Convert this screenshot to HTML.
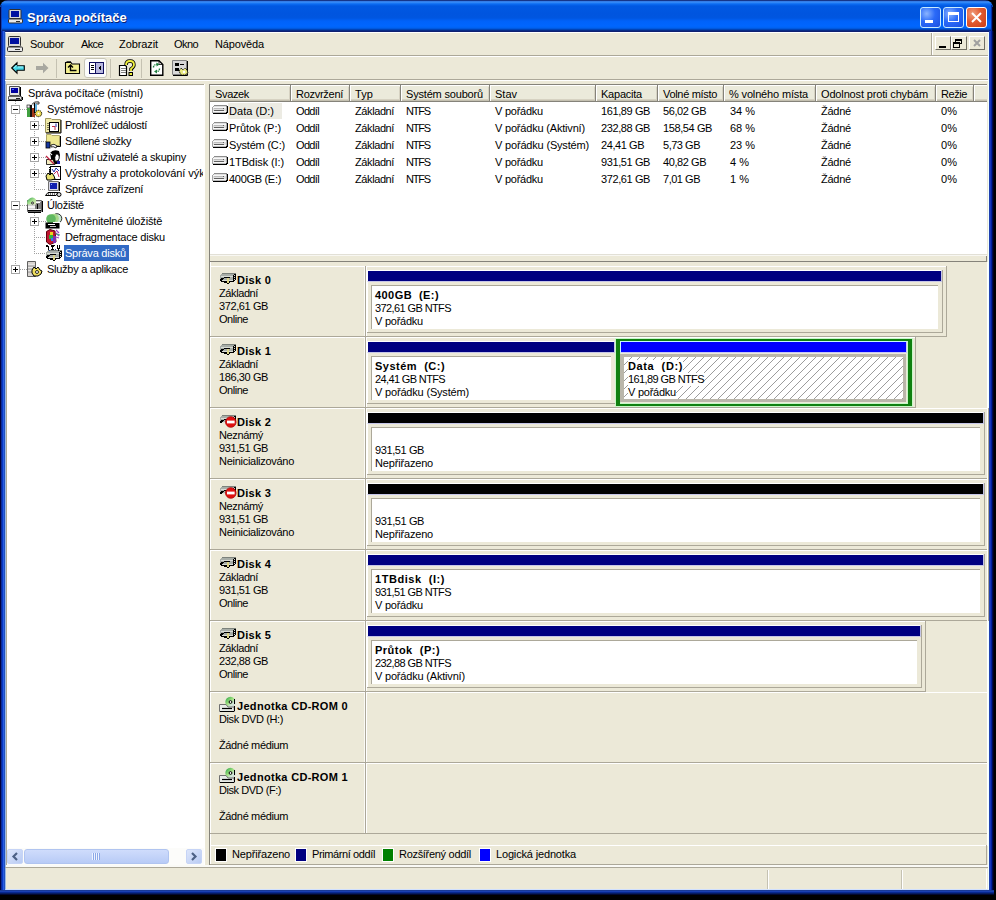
<!DOCTYPE html><html><head><meta charset="utf-8"><style>
*{margin:0;padding:0;box-sizing:border-box}
html,body{width:996px;height:900px;background:#000;overflow:hidden}
body{position:relative;font-family:"Liberation Sans",sans-serif;font-size:11px;color:#000}
.a{position:absolute}
.t{position:absolute;white-space:pre;line-height:13px;font-size:11px}
.b{font-weight:bold}
svg{position:absolute;overflow:visible}
</style></head><body>
<div class="a" style="left:0px;top:0px;width:993px;height:33px;border-radius:8px 8px 0 0;background:linear-gradient(to bottom,#00003a 0px,#2a6ad8 1px,#3d90f8 2px,#0b6cf2 4px,#0058e2 6px,#0055df 14px,#0056e0 18px,#0062fa 21px,#0066ff 26px,#0062f0 28px,#0050d0 29px,#0038a0 30px,#102070 31px,#102070 33px)"></div>
<div class="a" style="left:0px;top:31px;width:1px;height:864px;background:#000040"></div>
<div class="a" style="left:1px;top:31px;width:1px;height:864px;background:#0a2c98"></div>
<div class="a" style="left:2px;top:31px;width:1px;height:864px;background:#0838c8"></div>
<div class="a" style="left:3px;top:31px;width:1px;height:864px;background:#2a5ee0"></div>
<div class="a" style="left:4px;top:31px;width:1px;height:864px;background:#2050c0"></div>
<div class="a" style="left:0px;top:7px;width:1px;height:24px;background:#000040"></div>
<div class="a" style="left:1px;top:5px;width:1px;height:26px;background:#1040b0"></div>
<div class="a" style="left:992px;top:7px;width:1px;height:24px;background:#000030"></div>
<div class="a" style="left:991px;top:5px;width:1px;height:26px;background:#0030a0"></div>
<div class="a" style="left:989px;top:31px;width:1px;height:864px;background:#2040b0"></div>
<div class="a" style="left:990px;top:31px;width:1px;height:864px;background:#1838b8"></div>
<div class="a" style="left:991px;top:31px;width:1px;height:864px;background:#0020a0"></div>
<div class="a" style="left:992px;top:31px;width:1px;height:864px;background:#000c50"></div>
<div class="a" style="left:993px;top:31px;width:1px;height:864px;background:#000020"></div>
<div class="a" style="left:0px;top:890px;width:994px;height:1px;background:#1a3a98"></div>
<div class="a" style="left:0px;top:891px;width:994px;height:1px;background:#1a40b0"></div>
<div class="a" style="left:0px;top:892px;width:994px;height:1px;background:#082890"></div>
<div class="a" style="left:0px;top:893px;width:994px;height:1px;background:#061c60"></div>
<div class="a" style="left:0px;top:894px;width:994px;height:1px;background:#020830"></div>
<div class="a" style="left:5px;top:32px;width:984px;height:858px;background:#ece9d8;border:1px solid #98b8e8;border-top-color:#fff;border-right-color:#f0ffff;border-bottom-color:#d0e0ff"></div>
<svg style="left:8px;top:9px" width="15" height="15" viewBox="0 0 15 15">
<rect x="1" y="0.5" width="12" height="9" rx="1" fill="#d8d8d8" stroke="#303030"/>
<rect x="3" y="2" width="8" height="6" fill="#0010a0"/>
<rect x="0.5" y="10" width="14" height="4" rx="1" fill="#e8e8e8" stroke="#303030"/>
<rect x="8" y="12" width="4" height="1" fill="#303030"/></svg>
<div class="t b" style="left:27px;top:10px;font-size:13px;line-height:16px;color:#fff;text-shadow:1px 1px 0 #0a1e6e">Správa počítače</div>
<div class="a" style="left:920px;top:7px;width:21px;height:21px;border:1px solid #c8ecff;border-radius:3px;background:radial-gradient(circle at 30% 30%,#8ab4ff 0,#2a6af8 45%,#1a50e0 100%)"></div>
<div class="a" style="left:943px;top:7px;width:21px;height:21px;border:1px solid #c8ecff;border-radius:3px;background:radial-gradient(circle at 30% 30%,#8ab4ff 0,#2a6af8 45%,#1a50e0 100%)"></div>
<div class="a" style="left:966px;top:7px;width:21px;height:21px;border:1px solid #fff;border-radius:3px;background:radial-gradient(circle at 30% 30%,#f0a080 0,#e25a30 45%,#c83c18 100%)"></div>
<div class="a" style="left:925px;top:20px;width:8px;height:3px;background:#fff"></div>
<div class="a" style="left:948px;top:12px;width:11px;height:10px;border:1px solid #fff;border-top-width:3px"></div>
<svg style="left:966px;top:7px" width="21" height="21"><path d="M6 6 L15 15 M15 6 L6 15" stroke="#fff" stroke-width="2"/></svg>
<svg style="left:7px;top:36px" width="16" height="16" viewBox="0 0 16 16">
<rect x="1.5" y="0.5" width="12" height="10" rx="1" fill="#d8d8d8" stroke="#303030"/>
<rect x="3" y="2" width="9" height="6" fill="#0010a0"/>
<rect x="0.5" y="11" width="15" height="4.5" rx="1" fill="#e8e8e8" stroke="#303030"/>
<rect x="8" y="13" width="5" height="1" fill="#303030"/></svg>
<div class="t " style="left:30px;top:38px;;letter-spacing:-0.25px">Soubor</div>
<div class="t " style="left:81px;top:38px;;letter-spacing:-0.61px">Akce</div>
<div class="t " style="left:119px;top:38px;;letter-spacing:-0.09px">Zobrazit</div>
<div class="t " style="left:174px;top:38px;;letter-spacing:-0.57px">Okno</div>
<div class="t " style="left:215px;top:38px;;letter-spacing:-0.14px">Nápověda</div>
<div class="a" style="left:5px;top:55px;width:983px;height:1px;background:#aca899"></div>
<div class="a" style="left:5px;top:56px;width:983px;height:1px;background:#fff"></div>
<div class="a" style="left:931px;top:33px;width:1px;height:22px;background:#aca899"></div>
<div class="a" style="left:932px;top:33px;width:1px;height:22px;background:#fff"></div>
<div class="a" style="left:935px;top:36px;width:16px;height:14px;background:#ece9d8;border:1px solid;border-color:#fff #716f64 #716f64 #fff"></div>
<div class="a" style="left:951px;top:36px;width:16px;height:14px;background:#ece9d8;border:1px solid;border-color:#fff #716f64 #716f64 #fff"></div>
<div class="a" style="left:969px;top:36px;width:16px;height:14px;background:#ece9d8;border:1px solid;border-color:#fff #716f64 #716f64 #fff"></div>
<div class="a" style="left:939px;top:46px;width:7px;height:2px;background:#000"></div>
<div class="a" style="left:955px;top:39px;width:7px;height:5px;border:1px solid #000;border-top-width:2px"></div>
<div class="a" style="left:953px;top:42px;width:7px;height:6px;border:1px solid #000;border-top-width:2px;background:#ece9d8"></div>
<svg style="left:969px;top:36px" width="16" height="14"><path d="M5 4 L11 10 M11 4 L5 10" stroke="#a0a0a0" stroke-width="2"/></svg>
<svg style="left:11px;top:62px" width="14" height="12" viewBox="0 0 14 12">
<path d="M0.7 6 L6 0.8 L6 3.8 L13.3 3.8 L13.3 8.2 L6 8.2 L6 11.2 Z" fill="#48d8e8" stroke="#000" stroke-width="1.1"/><path d="M3 6 L6.5 2.8 M7 5 H12" stroke="#b0f8ff" stroke-width="0.9"/></svg>
<svg style="left:35px;top:62px" width="14" height="12" viewBox="0 0 14 12">
<path d="M13.5 6 L8 0.8 L8 4 L1 4 L1 8 L8 8 L8 11.2 Z" fill="#a8a8a0"/></svg>
<div class="a" style="left:56px;top:59px;width:1px;height:19px;background:#c5c2b2"></div>
<svg style="left:64px;top:60px" width="17" height="15" viewBox="0 0 17 15">
<path d="M1.5 2.5 H7 L8 4 H15.5 V13.5 H1.5Z" fill="#f4f090" stroke="#000" stroke-width="1.1"/><path d="M2.5 1.5 H7" stroke="#404040"/>
<path d="M4 7.5 L6.5 5 L9 7.5 M6.5 5.5 V10.5 H12.5" fill="none" stroke="#000" stroke-width="1.4"/></svg>
<div class="a" style="left:84px;top:58px;width:23px;height:20px;background:#fcfcfb;border:1px solid #c8c6b8;border-radius:3px"></div>
<svg style="left:89px;top:62px" width="15" height="12" viewBox="0 0 15 12" shape-rendering="crispEdges">
<rect x="0" y="0" width="15" height="12" fill="#101060"/>
<rect x="1" y="1" width="5" height="10" fill="#fff"/><rect x="7" y="1" width="7" height="10" fill="#b8b8e0"/>
<rect x="2" y="3" width="3" height="1" fill="#000"/><rect x="2" y="5" width="3" height="1" fill="#000"/><rect x="2" y="7" width="3" height="1" fill="#000"/>
<path d="M12 3 L12 9 L9 6Z" fill="#000"/></svg>
<div class="a" style="left:110px;top:59px;width:1px;height:19px;background:#c5c2b2"></div>
<svg style="left:118px;top:59px" width="17" height="17" viewBox="0 0 17 17">
<path d="M1.5 6.5 H7.5 L8.5 7.5 V16.5 H1.5Z" fill="#fff" stroke="#000" stroke-width="1.2"/>
<path d="M3 9.5h5M3 11.5h5M3 13.5h5" stroke="#808080"/>
<path d="M8 6 Q8 2 12 2 Q16 2 16 6 Q16 8 13 10 L13 12" fill="none" stroke="#000" stroke-width="3.4"/>
<path d="M8 6 Q8 2 12 2 Q16 2 16 6 Q16 8 13 10 L13 12" fill="none" stroke="#f0f040" stroke-width="1.8"/>
<rect x="11" y="13.5" width="3.5" height="3" fill="#f0f040" stroke="#000"/></svg>
<div class="a" style="left:141px;top:59px;width:1px;height:19px;background:#c5c2b2"></div>
<svg style="left:150px;top:60px" width="14" height="16" viewBox="0 0 14 16">
<path d="M0.7 0.7 H9 L12.8 4.5 V15.3 H0.7Z" fill="#fff" stroke="#000" stroke-width="1.4"/><path d="M9 1 V4.5 H12.5" fill="none" stroke="#000" stroke-width="0.8"/>
<path d="M3.5 7.5 Q3.5 4.5 7 4.3" fill="none" stroke="#208040" stroke-width="1.4" stroke-dasharray="1.5 0.8"/><path d="M6.5 2.5 L9.5 4.5 L6.5 6.5Z" fill="#208040"/>
<path d="M9.5 8.5 Q9.5 11.5 6 11.7" fill="none" stroke="#208040" stroke-width="1.4" stroke-dasharray="1.5 0.8"/><path d="M7 9.5 L4 11.5 L7 13.5Z" fill="#208040"/></svg>
<svg style="left:172px;top:60px" width="17" height="16" viewBox="0 0 17 16">
<path d="M0.5 0.5 H14.5 V14.5 H0.5Z" fill="#d8d8d8" stroke="#808080"/><path d="M15.5 1 V15.5 H1" fill="none" stroke="#000"/>
<rect x="3" y="3" width="4" height="3" fill="#000"/><rect x="8" y="4" width="4" height="1" fill="#000"/><rect x="3" y="8" width="4" height="3" fill="#000"/>
<path d="M7 11 L9 8 L11 10 L13 8 L15 10 L16 13 L13 15 L9 15Z" fill="#e8e880" stroke="#000" stroke-width="0.9" stroke-dasharray="1.2 0.6"/><circle cx="12" cy="12" r="1.2" fill="#fff"/></svg>
<div class="a" style="left:5px;top:79px;width:983px;height:1px;background:#aca899"></div>
<div class="a" style="left:5px;top:80px;width:983px;height:1px;background:#fff"></div>
<div class="a" style="left:6px;top:84px;width:199px;height:783px;background:#fff;border-left:1px solid #aca899;border-top:1px solid #aca899;border-right:1px solid #f4f3ee"></div>
<div class="a" style="left:15px;top:101px;width:1px;height:169px;background:repeating-linear-gradient(to bottom,#a0a0a0 0,#a0a0a0 1px,transparent 1px,transparent 2px)"></div>
<div class="a" style="left:34px;top:117px;width:1px;height:72px;background:repeating-linear-gradient(to bottom,#a0a0a0 0,#a0a0a0 1px,transparent 1px,transparent 2px)"></div>
<div class="a" style="left:34px;top:213px;width:1px;height:40px;background:repeating-linear-gradient(to bottom,#a0a0a0 0,#a0a0a0 1px,transparent 1px,transparent 2px)"></div>
<div class="a" style="left:20px;top:109px;width:7px;height:1px;background:repeating-linear-gradient(to right,#a0a0a0 0,#a0a0a0 1px,transparent 1px,transparent 2px)"></div>
<div class="a" style="left:20px;top:205px;width:7px;height:1px;background:repeating-linear-gradient(to right,#a0a0a0 0,#a0a0a0 1px,transparent 1px,transparent 2px)"></div>
<div class="a" style="left:20px;top:269px;width:7px;height:1px;background:repeating-linear-gradient(to right,#a0a0a0 0,#a0a0a0 1px,transparent 1px,transparent 2px)"></div>
<div class="a" style="left:39px;top:125px;width:7px;height:1px;background:repeating-linear-gradient(to right,#a0a0a0 0,#a0a0a0 1px,transparent 1px,transparent 2px)"></div>
<div class="a" style="left:39px;top:141px;width:7px;height:1px;background:repeating-linear-gradient(to right,#a0a0a0 0,#a0a0a0 1px,transparent 1px,transparent 2px)"></div>
<div class="a" style="left:39px;top:157px;width:7px;height:1px;background:repeating-linear-gradient(to right,#a0a0a0 0,#a0a0a0 1px,transparent 1px,transparent 2px)"></div>
<div class="a" style="left:39px;top:173px;width:7px;height:1px;background:repeating-linear-gradient(to right,#a0a0a0 0,#a0a0a0 1px,transparent 1px,transparent 2px)"></div>
<div class="a" style="left:34px;top:189px;width:12px;height:1px;background:repeating-linear-gradient(to right,#a0a0a0 0,#a0a0a0 1px,transparent 1px,transparent 2px)"></div>
<div class="a" style="left:39px;top:221px;width:7px;height:1px;background:repeating-linear-gradient(to right,#a0a0a0 0,#a0a0a0 1px,transparent 1px,transparent 2px)"></div>
<div class="a" style="left:34px;top:237px;width:12px;height:1px;background:repeating-linear-gradient(to right,#a0a0a0 0,#a0a0a0 1px,transparent 1px,transparent 2px)"></div>
<div class="a" style="left:34px;top:253px;width:12px;height:1px;background:repeating-linear-gradient(to right,#a0a0a0 0,#a0a0a0 1px,transparent 1px,transparent 2px)"></div>
<div class="a" style="left:11px;top:105px;width:9px;height:9px;background:#fff;border:1px solid #a5a5a5"></div>
<div class="a" style="left:13px;top:109px;width:5px;height:1px;background:#000"></div>
<div class="a" style="left:11px;top:201px;width:9px;height:9px;background:#fff;border:1px solid #a5a5a5"></div>
<div class="a" style="left:13px;top:205px;width:5px;height:1px;background:#000"></div>
<div class="a" style="left:11px;top:265px;width:9px;height:9px;background:#fff;border:1px solid #a5a5a5"></div>
<div class="a" style="left:13px;top:269px;width:5px;height:1px;background:#000"></div>
<div class="a" style="left:15px;top:267px;width:1px;height:5px;background:#000"></div>
<div class="a" style="left:30px;top:121px;width:9px;height:9px;background:#fff;border:1px solid #a5a5a5"></div>
<div class="a" style="left:32px;top:125px;width:5px;height:1px;background:#000"></div>
<div class="a" style="left:34px;top:123px;width:1px;height:5px;background:#000"></div>
<div class="a" style="left:30px;top:137px;width:9px;height:9px;background:#fff;border:1px solid #a5a5a5"></div>
<div class="a" style="left:32px;top:141px;width:5px;height:1px;background:#000"></div>
<div class="a" style="left:34px;top:139px;width:1px;height:5px;background:#000"></div>
<div class="a" style="left:30px;top:153px;width:9px;height:9px;background:#fff;border:1px solid #a5a5a5"></div>
<div class="a" style="left:32px;top:157px;width:5px;height:1px;background:#000"></div>
<div class="a" style="left:34px;top:155px;width:1px;height:5px;background:#000"></div>
<div class="a" style="left:30px;top:169px;width:9px;height:9px;background:#fff;border:1px solid #a5a5a5"></div>
<div class="a" style="left:32px;top:173px;width:5px;height:1px;background:#000"></div>
<div class="a" style="left:34px;top:171px;width:1px;height:5px;background:#000"></div>
<div class="a" style="left:30px;top:217px;width:9px;height:9px;background:#fff;border:1px solid #a5a5a5"></div>
<div class="a" style="left:32px;top:221px;width:5px;height:1px;background:#000"></div>
<div class="a" style="left:34px;top:219px;width:1px;height:5px;background:#000"></div>
<svg style="left:7px;top:86px" width="16" height="16" viewBox="0 0 16 16"><path d="M2.5 0.5 H12.5 V9.5 H2.5Z" fill="#e4e4e4" stroke="#505050"/><path d="M13.5 1 V10" stroke="#000"/>
<rect x="4" y="2" width="7" height="5" fill="#0000a0"/><rect x="5" y="3" width="2" height="1" fill="#4060ff"/>
<path d="M1.5 10.5 H14.5 V13.5 H1.5Z" fill="#e8e8e8" stroke="#606060"/><path d="M1 14.5 H15 M15.5 11 V14" stroke="#000"/><rect x="9" y="12" width="4" height="1" fill="#202020"/></svg>
<div class="t " style="left:28px;top:87px;;letter-spacing:-0.20px">Správa počítače (místní)</div>
<svg style="left:26px;top:101px" width="17" height="16" viewBox="0 0 17 16">
<path d="M6 3.5 Q8 0 13 1 L13 3 Q9 2 8 5" fill="#c8c8c8" stroke="#404040"/>
<rect x="1" y="4" width="3" height="3" fill="#f0f0f0" stroke="#000" stroke-width="0.6"/>
<rect x="1" y="7" width="3" height="9" fill="#40a040"/><rect x="4" y="4" width="2" height="12" fill="#101010"/>
<rect x="6" y="7" width="3" height="9" fill="#a03818"/><rect x="9" y="3" width="2" height="9" fill="#60b0e0"/><rect x="8" y="2" width="1" height="10" fill="#000"/>
<circle cx="12.5" cy="12.5" r="3.2" fill="#e8d850" stroke="#000" stroke-width="1" stroke-dasharray="1.2 0.8"/><circle cx="12.5" cy="12.5" r="1" fill="#fff"/></svg>
<div class="t " style="left:47px;top:103px;;letter-spacing:-0.03px">Systémové nástroje</div>
<svg style="left:45px;top:117px" width="17" height="16" viewBox="0 0 17 16">
<path d="M0.5 1.5 H6 L7 2.5 H15.5 V15.5 H0.5Z" fill="#f0eaa8" stroke="#a09860"/><path d="M16 3 V16 H1" stroke="#000" fill="none"/>
<rect x="4.5" y="5.5" width="9" height="9" fill="#fff" stroke="#000"/><path d="M3 6v8" stroke="#000" stroke-dasharray="1 1"/>
<path d="M7 9.5 H10 V13" stroke="#c03040" fill="none"/><path d="M11 6.5 V10" stroke="#2030a0"/></svg>
<div class="t " style="left:65px;top:119px;;letter-spacing:-0.30px">Prohlížeč událostí</div>
<svg style="left:45px;top:133px" width="17" height="16" viewBox="0 0 17 16">
<path d="M1.5 1.5 H6 L7 2.5 H14.5 V12.5 H1.5Z" fill="#eee890" stroke="#b0a868"/><path d="M15.5 3 V13.5 H8" stroke="#000" fill="none"/>
<rect x="1" y="9" width="4" height="6" fill="#1838a0" stroke="#000" stroke-width="0.8"/>
<path d="M6 12 Q9 10 12 13 L11 15 Q8 13 6 14Z" fill="#f4f4f4" stroke="#000" stroke-width="0.8"/></svg>
<div class="t " style="left:65px;top:135px;;letter-spacing:-0.35px">Sdílené složky</div>
<svg style="left:45px;top:149px" width="17" height="16" viewBox="0 0 17 16">
<path d="M5 4 Q8 0 14 2 L15 6 L13 15 L7 15 Z" fill="#000"/>
<path d="M11 5 Q15 5 14 10 Q13 13 10 12 Q9 8 11 5Z" fill="#fff" stroke="#000" stroke-width="0.8"/>
<path d="M1.5 10.5 H8 L10 15.5 H1.5Z" fill="#f4ecc0" stroke="#000" stroke-width="0.8"/>
<path d="M1 7 L9 15" stroke="#c02040" stroke-width="1.2"/><path d="M3 4 Q5 3 7 6" stroke="#fff" stroke-width="1.2" fill="none"/>
<rect x="12" y="12" width="3" height="3" fill="#2020a0"/></svg>
<div class="t " style="left:65px;top:151px;;letter-spacing:-0.19px">Místní uživatelé a skupiny</div>
<svg style="left:45px;top:165px" width="17" height="16" viewBox="0 0 17 16">
<rect x="5.5" y="1.5" width="10" height="13" fill="#fff" stroke="#000"/><path d="M4.5 2v5" stroke="#000" stroke-dasharray="1 1"/>
<path d="M7 4 L9 7 L11 3 L14 6" stroke="#2030b0" fill="none"/><path d="M9 9 L12 6 L14 12" stroke="#c03060" fill="none"/>
<path d="M1 11 L3 8 L5 10 L7 8 L9 11 L10 14 L6 15 L2 15Z" fill="#e8e070" stroke="#000" stroke-width="1"/><path d="M5 5 V9" stroke="#000" stroke-width="1.5"/></svg>
<div class="t " style="left:65px;top:167px;;letter-spacing:-0.03px">Výstrahy a protokolování výkonu</div>
<svg style="left:45px;top:181px" width="17" height="16" viewBox="0 0 17 16">
<path d="M3.5 0.5 H13.5 V9.5 H3.5Z" fill="#d8d8e8" stroke="#707070"/><path d="M14.5 1 V10" stroke="#000"/>
<rect x="5" y="2" width="7" height="6" fill="#1020b0"/><rect x="6" y="3" width="1" height="1" fill="#80a0ff"/>
<path d="M0.5 14.5 L3 11.5 H13 L11 14.5Z" fill="#f0f0f0" stroke="#000"/><path d="M3 13 H11" stroke="#000" stroke-dasharray="1 1"/>
<ellipse cx="14" cy="13.5" rx="2" ry="2" fill="#e0e0e0" stroke="#000"/></svg>
<div class="t " style="left:65px;top:183px;;letter-spacing:-0.28px">Správce zařízení</div>
<svg style="left:26px;top:197px" width="17" height="16" viewBox="0 0 17 16">
<defs><linearGradient id="cdg2" x1="0" y1="0" x2="1" y2="1"><stop offset="0" stop-color="#30a050"/><stop offset="0.5" stop-color="#a8e090"/><stop offset="1" stop-color="#e0e8c0"/></linearGradient></defs>
<path d="M1.5 3.5 H15.5 V14.5 H1.5Z" fill="#d0d0d0" stroke="#606060"/><path d="M2 15.5 H15 M16.5 4 V15" stroke="#000"/>
<rect x="9" y="5" width="6" height="7" fill="#808080"/><rect x="10" y="5" width="4" height="1" fill="#fff"/><rect x="11" y="7" width="1" height="5" fill="#000"/>
<rect x="2" y="9" width="7" height="2" fill="#f4f4f4"/><rect x="2" y="12" width="12" height="1" fill="#f4f4f4"/><rect x="2" y="13" width="13" height="1" fill="#000"/>
<path d="M1.5 7.5 A5 5 0 0 1 10 2.5 L10 7.5Z" fill="url(#cdg2)"/>
<circle cx="6.5" cy="6" r="1" fill="#fff" stroke="#000" stroke-width="0.8"/></svg>
<div class="t " style="left:47px;top:199px;;letter-spacing:-0.27px">Úložiště</div>
<svg style="left:45px;top:213px" width="17" height="16" viewBox="0 0 17 16">
<circle cx="12" cy="5.5" r="4.8" fill="#c8e8d0" stroke="#000" stroke-width="0.8"/><circle cx="9" cy="5.5" r="4.8" fill="#a8d888"/><circle cx="6" cy="6" r="4.8" fill="#60b860"/>
<rect x="0.5" y="9.5" width="14" height="6" fill="#000"/><rect x="3" y="11" width="7" height="1" fill="#fff"/><rect x="5" y="13" width="6" height="1" fill="#c0c0c0"/><rect x="8" y="9" width="7" height="1" fill="#fff"/></svg>
<div class="t " style="left:65px;top:215px;;letter-spacing:-0.17px">Vyměnitelné úložiště</div>
<svg style="left:45px;top:229px" width="17" height="16" viewBox="0 0 17 16">
<path d="M1.5 2.5 L5 0.5 L10 2 L11 13 L5 15.5 L1.5 13Z" fill="#c01830" stroke="#600010"/>
<rect x="5" y="3" width="3" height="4" fill="#f0d020"/><rect x="4" y="6" width="4" height="4" fill="#30b040"/><rect x="6" y="9" width="3" height="3" fill="#3080f0"/><rect x="8" y="7" width="3" height="7" fill="#8030b0"/>
<path d="M11 1 L14 4 M11 4 L14 7 M11 8 L14 9" stroke="#a040c0" stroke-width="1.2"/><path d="M11 5 L15 6" stroke="#40a080"/></svg>
<div class="t " style="left:65px;top:231px;;letter-spacing:-0.21px">Defragmentace disku</div>
<svg style="left:46px;top:250px" width="16" height="11" shape-rendering="crispEdges"><rect x="2" y="0" width="14" height="1" fill="#7c827c"/><rect x="1" y="1" width="13" height="1" fill="#a8aea8"/><rect x="14" y="1" width="2" height="1" fill="#000"/><rect x="0" y="2" width="13" height="1" fill="#a8aea8"/><rect x="13" y="2" width="1" height="1" fill="#000"/><rect x="14" y="2" width="1" height="1" fill="#d8dcd6"/><rect x="15" y="2" width="1" height="1" fill="#000"/><rect x="0" y="3" width="1" height="1" fill="#a8aea8"/><rect x="1" y="3" width="12" height="1" fill="#d8dcd6"/><rect x="13" y="3" width="3" height="1" fill="#000"/><rect x="0" y="4" width="4" height="1" fill="#a8aea8"/><rect x="4" y="4" width="6" height="1" fill="#000"/><rect x="10" y="4" width="3" height="1" fill="#a8aea8"/><rect x="13" y="4" width="1" height="1" fill="#000"/><rect x="14" y="4" width="1" height="1" fill="#d8dcd6"/><rect x="15" y="4" width="1" height="1" fill="#000"/><rect x="0" y="5" width="1" height="1" fill="#a8aea8"/><rect x="1" y="5" width="3" height="1" fill="#000"/><rect x="4" y="5" width="3" height="1" fill="#a8aea8"/><rect x="7" y="5" width="2" height="1" fill="#dcd488"/><rect x="9" y="5" width="4" height="1" fill="#a8aea8"/><rect x="13" y="5" width="3" height="1" fill="#000"/><rect x="0" y="6" width="3" height="1" fill="#000"/><rect x="3" y="6" width="4" height="1" fill="#a8aea8"/><rect x="7" y="6" width="2" height="1" fill="#dcd488"/><rect x="9" y="6" width="4" height="1" fill="#a8aea8"/><rect x="13" y="6" width="1" height="1" fill="#000"/><rect x="14" y="6" width="1" height="1" fill="#d8dcd6"/><rect x="15" y="6" width="1" height="1" fill="#000"/><rect x="0" y="7" width="2" height="1" fill="#000"/><rect x="2" y="7" width="5" height="1" fill="#d8dcd6"/><rect x="7" y="7" width="2" height="1" fill="#dcd488"/><rect x="9" y="7" width="4" height="1" fill="#d8dcd6"/><rect x="13" y="7" width="2" height="1" fill="#000"/><rect x="1" y="8" width="6" height="1" fill="#000"/><rect x="7" y="8" width="2" height="1" fill="#dcd488"/><rect x="9" y="8" width="5" height="1" fill="#000"/><rect x="4" y="9" width="3" height="1" fill="#000"/><rect x="7" y="9" width="2" height="1" fill="#dcd488"/><rect x="9" y="9" width="1" height="1" fill="#000"/><rect x="7" y="10" width="2" height="1" fill="#000"/></svg>
<svg style="left:45px;top:244px" width="17" height="7" viewBox="0 0 17 7" shape-rendering="crispEdges">
<path d="M1 1h2v1h1v4h-1v-3h-2z M6 1h4v1h-1v1h-1v2h1v1h-3v-1h1v-2h-1z M12 1h1v3h1v-3h1v4h-1v2h-1v-2h-1z" fill="#000"/>
<path d="M4 6h1v1h-1z M10 5h1v1h-1z" fill="#2040a0"/></svg>
<div class="a" style="left:64px;top:245px;width:65px;height:16px;background:#316ac5"></div>
<div class="t " style="left:65px;top:247px;color:#fff;letter-spacing:-0.22px">Správa disků</div>
<svg style="left:26px;top:261px" width="17" height="16" viewBox="0 0 17 16">
<path d="M1.5 0.5 H9.5 V15.5 H1.5Z" fill="#d8d4d0" stroke="#606060"/><path d="M2 4h7M2 7h7M2 10h7" stroke="#f8f8f8"/><path d="M2 5h7M2 8h7M2 11h7" stroke="#909090"/>
<path d="M6 9 L8 6 L10 8 L12 6 L14 9 L16 10 L15 13 L12 15 L8 15 L6 12Z" fill="#f0e060" stroke="#000" stroke-width="1"/><circle cx="11" cy="11" r="1.5" fill="#fff" stroke="#000" stroke-width="0.8"/></svg>
<div class="t " style="left:47px;top:263px;;letter-spacing:-0.27px">Služby a aplikace</div>
<div class="a" style="left:203px;top:85px;width:2px;height:781px;background:#fff"></div>
<div class="a" style="left:204px;top:84px;width:1px;height:783px;background:#fff"></div>
<div class="a" style="left:7px;top:848px;width:197px;height:17px;background:#fcfcfa"></div>
<div class="a" style="left:7px;top:849px;width:16px;height:15px;border-radius:2px;background:linear-gradient(135deg,#dde6fb,#b9cbf3);border:1px solid #c6d4f6"></div>
<div class="a" style="left:24px;top:849px;width:145px;height:15px;border-radius:3px;background:linear-gradient(#cfdcfc,#b8cbf6);border:1px solid #b0c4f0"></div>
<div class="a" style="left:92px;top:853px;width:1px;height:7px;background:#eef3ff"></div>
<div class="a" style="left:93px;top:853px;width:1px;height:7px;background:#8ca8e8"></div>
<div class="a" style="left:94px;top:853px;width:1px;height:7px;background:#eef3ff"></div>
<div class="a" style="left:95px;top:853px;width:1px;height:7px;background:#8ca8e8"></div>
<div class="a" style="left:96px;top:853px;width:1px;height:7px;background:#eef3ff"></div>
<div class="a" style="left:97px;top:853px;width:1px;height:7px;background:#8ca8e8"></div>
<div class="a" style="left:98px;top:853px;width:1px;height:7px;background:#eef3ff"></div>
<div class="a" style="left:99px;top:853px;width:1px;height:7px;background:#8ca8e8"></div>
<div class="a" style="left:186px;top:849px;width:16px;height:15px;border-radius:2px;background:linear-gradient(135deg,#dde6fb,#b9cbf3);border:1px solid #c6d4f6"></div>
<svg style="left:7px;top:849px" width="16" height="15"><path d="M10 4 L6.5 7.5 L10 11" stroke="#4d6185" stroke-width="2.2" fill="none"/></svg>
<svg style="left:186px;top:849px" width="16" height="15"><path d="M6 4 L9.5 7.5 L6 11" stroke="#4d6185" stroke-width="2.2" fill="none"/></svg>
<div class="a" style="left:205px;top:81px;width:4px;height:786px;background:#ece9d8"></div>
<div class="a" style="left:209px;top:84px;width:1px;height:781px;background:#85837a"></div>
<div class="a" style="left:209px;top:84px;width:778px;height:1px;background:#85837a"></div>
<div class="a" style="left:210px;top:85px;width:777px;height:169px;background:#fff"></div>
<div class="a" style="left:210px;top:254px;width:777px;height:1px;background:#e2e0d6"></div>
<div class="a" style="left:210px;top:255px;width:777px;height:1px;background:#f8f7f2"></div>
<div class="a" style="left:210px;top:85px;width:777px;height:16px;background:#ebeadb"></div>
<div class="a" style="left:210px;top:99px;width:777px;height:1px;background:#d6d2c2"></div>
<div class="a" style="left:210px;top:100px;width:777px;height:1px;background:#c4c0b0"></div>
<div class="a" style="left:210px;top:101px;width:777px;height:1px;background:#85837a"></div>
<div class="a" style="left:210px;top:85px;width:777px;height:1px;background:#fff"></div>
<div class="t " style="left:215px;top:88px;;letter-spacing:-0.35px">Svazek</div>
<div class="a" style="left:290px;top:85px;width:1px;height:16px;background:#85837a"></div>
<div class="a" style="left:291px;top:86px;width:1px;height:15px;background:#fff"></div>
<div class="a" style="left:289px;top:87px;width:1px;height:13px;background:#d6d2c2"></div>
<div class="t " style="left:296px;top:88px;;letter-spacing:-0.28px">Rozvržení</div>
<div class="a" style="left:349px;top:85px;width:1px;height:16px;background:#85837a"></div>
<div class="a" style="left:350px;top:86px;width:1px;height:15px;background:#fff"></div>
<div class="a" style="left:348px;top:87px;width:1px;height:13px;background:#d6d2c2"></div>
<div class="t " style="left:355px;top:88px;;letter-spacing:0.09px">Typ</div>
<div class="a" style="left:400px;top:85px;width:1px;height:16px;background:#85837a"></div>
<div class="a" style="left:401px;top:86px;width:1px;height:15px;background:#fff"></div>
<div class="a" style="left:399px;top:87px;width:1px;height:13px;background:#d6d2c2"></div>
<div class="t " style="left:406px;top:88px;;letter-spacing:-0.18px">Systém souborů</div>
<div class="a" style="left:489px;top:85px;width:1px;height:16px;background:#85837a"></div>
<div class="a" style="left:490px;top:86px;width:1px;height:15px;background:#fff"></div>
<div class="a" style="left:488px;top:87px;width:1px;height:13px;background:#d6d2c2"></div>
<div class="t " style="left:495px;top:88px;;letter-spacing:-0.00px">Stav</div>
<div class="a" style="left:595px;top:85px;width:1px;height:16px;background:#85837a"></div>
<div class="a" style="left:596px;top:86px;width:1px;height:15px;background:#fff"></div>
<div class="a" style="left:594px;top:87px;width:1px;height:13px;background:#d6d2c2"></div>
<div class="t " style="left:601px;top:88px;;letter-spacing:-0.23px">Kapacita</div>
<div class="a" style="left:657px;top:85px;width:1px;height:16px;background:#85837a"></div>
<div class="a" style="left:658px;top:86px;width:1px;height:15px;background:#fff"></div>
<div class="a" style="left:656px;top:87px;width:1px;height:13px;background:#d6d2c2"></div>
<div class="t " style="left:663px;top:88px;;letter-spacing:-0.32px">Volné místo</div>
<div class="a" style="left:723px;top:85px;width:1px;height:16px;background:#85837a"></div>
<div class="a" style="left:724px;top:86px;width:1px;height:15px;background:#fff"></div>
<div class="a" style="left:722px;top:87px;width:1px;height:13px;background:#d6d2c2"></div>
<div class="t " style="left:729px;top:88px;;letter-spacing:-0.15px">% volného místa</div>
<div class="a" style="left:815px;top:85px;width:1px;height:16px;background:#85837a"></div>
<div class="a" style="left:816px;top:86px;width:1px;height:15px;background:#fff"></div>
<div class="a" style="left:814px;top:87px;width:1px;height:13px;background:#d6d2c2"></div>
<div class="t " style="left:821px;top:88px;;letter-spacing:-0.15px">Odolnost proti chybám</div>
<div class="a" style="left:935px;top:85px;width:1px;height:16px;background:#85837a"></div>
<div class="a" style="left:936px;top:86px;width:1px;height:15px;background:#fff"></div>
<div class="a" style="left:934px;top:87px;width:1px;height:13px;background:#d6d2c2"></div>
<div class="t " style="left:941px;top:88px;;letter-spacing:-0.42px">Režie</div>
<div class="a" style="left:973px;top:85px;width:1px;height:16px;background:#85837a"></div>
<div class="a" style="left:974px;top:86px;width:1px;height:15px;background:#fff"></div>
<div class="a" style="left:972px;top:87px;width:1px;height:13px;background:#d6d2c2"></div>
<div class="a" style="left:228px;top:103px;width:54px;height:16px;background:#ecebe3"></div>
<svg style="left:212px;top:105px" width="16" height="9" shape-rendering="crispEdges"><rect x="2" y="0" width="13" height="1" fill="#8c8c8c"/><rect x="1" y="1" width="1" height="1" fill="#a4a4a4"/><rect x="2" y="1" width="12" height="1" fill="#e0e0e0"/><rect x="14" y="1" width="1" height="1" fill="#8c8c8c"/><rect x="15" y="1" width="1" height="1" fill="#000"/><rect x="0" y="2" width="1" height="1" fill="#a4a4a4"/><rect x="1" y="2" width="13" height="1" fill="#f8f8f8"/><rect x="14" y="2" width="1" height="1" fill="#b0b0b0"/><rect x="15" y="2" width="1" height="1" fill="#000"/><rect x="0" y="3" width="1" height="1" fill="#a4a4a4"/><rect x="1" y="3" width="1" height="1" fill="#e0e0e0"/><rect x="2" y="3" width="9" height="1" fill="#bcbcbc"/><rect x="11" y="3" width="1" height="1" fill="#606060"/><rect x="12" y="3" width="2" height="1" fill="#e0e0e0"/><rect x="14" y="3" width="1" height="1" fill="#b0b0b0"/><rect x="15" y="3" width="1" height="1" fill="#000"/><rect x="0" y="4" width="1" height="1" fill="#a4a4a4"/><rect x="1" y="4" width="13" height="1" fill="#e0e0e0"/><rect x="14" y="4" width="1" height="1" fill="#b0b0b0"/><rect x="15" y="4" width="1" height="1" fill="#000"/><rect x="0" y="5" width="1" height="1" fill="#a4a4a4"/><rect x="1" y="5" width="1" height="1" fill="#e0e0e0"/><rect x="2" y="5" width="10" height="1" fill="#606060"/><rect x="12" y="5" width="2" height="1" fill="#e0e0e0"/><rect x="14" y="5" width="1" height="1" fill="#b0b0b0"/><rect x="15" y="5" width="1" height="1" fill="#000"/><rect x="0" y="6" width="1" height="1" fill="#a4a4a4"/><rect x="1" y="6" width="13" height="1" fill="#f8f8f8"/><rect x="14" y="6" width="1" height="1" fill="#b0b0b0"/><rect x="15" y="6" width="1" height="1" fill="#000"/><rect x="0" y="7" width="1" height="1" fill="#a4a4a4"/><rect x="1" y="7" width="13" height="1" fill="#bcbcbc"/><rect x="14" y="7" width="2" height="1" fill="#000"/><rect x="1" y="8" width="14" height="1" fill="#000"/></svg>
<div class="t " style="left:229px;top:105px;;letter-spacing:0.04px">Data (D:)</div>
<div class="t " style="left:296px;top:105px;;letter-spacing:-0.66px">Oddíl</div>
<div class="t " style="left:355px;top:105px;;letter-spacing:-0.40px">Základní</div>
<div class="t " style="left:406px;top:105px;;letter-spacing:-1.18px">NTFS</div>
<div class="t " style="left:495px;top:105px;;letter-spacing:-0.24px">V pořádku</div>
<div class="t " style="left:601px;top:105px;;letter-spacing:-0.40px">161,89 GB</div>
<div class="t " style="left:663px;top:105px;;letter-spacing:-0.43px">56,02 GB</div>
<div class="t " style="left:730px;top:105px;;letter-spacing:-0.02px">34 %</div>
<div class="t " style="left:821px;top:105px;;letter-spacing:-0.24px">Žádné</div>
<div class="t " style="left:941px;top:105px;;letter-spacing:0.05px">0%</div>
<svg style="left:212px;top:122px" width="16" height="9" shape-rendering="crispEdges"><rect x="2" y="0" width="13" height="1" fill="#8c8c8c"/><rect x="1" y="1" width="1" height="1" fill="#a4a4a4"/><rect x="2" y="1" width="12" height="1" fill="#e0e0e0"/><rect x="14" y="1" width="1" height="1" fill="#8c8c8c"/><rect x="15" y="1" width="1" height="1" fill="#000"/><rect x="0" y="2" width="1" height="1" fill="#a4a4a4"/><rect x="1" y="2" width="13" height="1" fill="#f8f8f8"/><rect x="14" y="2" width="1" height="1" fill="#b0b0b0"/><rect x="15" y="2" width="1" height="1" fill="#000"/><rect x="0" y="3" width="1" height="1" fill="#a4a4a4"/><rect x="1" y="3" width="1" height="1" fill="#e0e0e0"/><rect x="2" y="3" width="9" height="1" fill="#bcbcbc"/><rect x="11" y="3" width="1" height="1" fill="#606060"/><rect x="12" y="3" width="2" height="1" fill="#e0e0e0"/><rect x="14" y="3" width="1" height="1" fill="#b0b0b0"/><rect x="15" y="3" width="1" height="1" fill="#000"/><rect x="0" y="4" width="1" height="1" fill="#a4a4a4"/><rect x="1" y="4" width="13" height="1" fill="#e0e0e0"/><rect x="14" y="4" width="1" height="1" fill="#b0b0b0"/><rect x="15" y="4" width="1" height="1" fill="#000"/><rect x="0" y="5" width="1" height="1" fill="#a4a4a4"/><rect x="1" y="5" width="1" height="1" fill="#e0e0e0"/><rect x="2" y="5" width="10" height="1" fill="#606060"/><rect x="12" y="5" width="2" height="1" fill="#e0e0e0"/><rect x="14" y="5" width="1" height="1" fill="#b0b0b0"/><rect x="15" y="5" width="1" height="1" fill="#000"/><rect x="0" y="6" width="1" height="1" fill="#a4a4a4"/><rect x="1" y="6" width="13" height="1" fill="#f8f8f8"/><rect x="14" y="6" width="1" height="1" fill="#b0b0b0"/><rect x="15" y="6" width="1" height="1" fill="#000"/><rect x="0" y="7" width="1" height="1" fill="#a4a4a4"/><rect x="1" y="7" width="13" height="1" fill="#bcbcbc"/><rect x="14" y="7" width="2" height="1" fill="#000"/><rect x="1" y="8" width="14" height="1" fill="#000"/></svg>
<div class="t " style="left:229px;top:122px;;letter-spacing:-0.05px">Průtok (P:)</div>
<div class="t " style="left:296px;top:122px;;letter-spacing:-0.66px">Oddíl</div>
<div class="t " style="left:355px;top:122px;;letter-spacing:-0.40px">Základní</div>
<div class="t " style="left:406px;top:122px;;letter-spacing:-1.18px">NTFS</div>
<div class="t " style="left:495px;top:122px;;letter-spacing:-0.19px">V pořádku (Aktivní)</div>
<div class="t " style="left:601px;top:122px;;letter-spacing:-0.40px">232,88 GB</div>
<div class="t " style="left:663px;top:122px;;letter-spacing:-0.40px">158,54 GB</div>
<div class="t " style="left:730px;top:122px;;letter-spacing:-0.02px">68 %</div>
<div class="t " style="left:821px;top:122px;;letter-spacing:-0.24px">Žádné</div>
<div class="t " style="left:941px;top:122px;;letter-spacing:0.05px">0%</div>
<svg style="left:212px;top:139px" width="16" height="9" shape-rendering="crispEdges"><rect x="2" y="0" width="13" height="1" fill="#8c8c8c"/><rect x="1" y="1" width="1" height="1" fill="#a4a4a4"/><rect x="2" y="1" width="12" height="1" fill="#e0e0e0"/><rect x="14" y="1" width="1" height="1" fill="#8c8c8c"/><rect x="15" y="1" width="1" height="1" fill="#000"/><rect x="0" y="2" width="1" height="1" fill="#a4a4a4"/><rect x="1" y="2" width="13" height="1" fill="#f8f8f8"/><rect x="14" y="2" width="1" height="1" fill="#b0b0b0"/><rect x="15" y="2" width="1" height="1" fill="#000"/><rect x="0" y="3" width="1" height="1" fill="#a4a4a4"/><rect x="1" y="3" width="1" height="1" fill="#e0e0e0"/><rect x="2" y="3" width="9" height="1" fill="#bcbcbc"/><rect x="11" y="3" width="1" height="1" fill="#606060"/><rect x="12" y="3" width="2" height="1" fill="#e0e0e0"/><rect x="14" y="3" width="1" height="1" fill="#b0b0b0"/><rect x="15" y="3" width="1" height="1" fill="#000"/><rect x="0" y="4" width="1" height="1" fill="#a4a4a4"/><rect x="1" y="4" width="13" height="1" fill="#e0e0e0"/><rect x="14" y="4" width="1" height="1" fill="#b0b0b0"/><rect x="15" y="4" width="1" height="1" fill="#000"/><rect x="0" y="5" width="1" height="1" fill="#a4a4a4"/><rect x="1" y="5" width="1" height="1" fill="#e0e0e0"/><rect x="2" y="5" width="10" height="1" fill="#606060"/><rect x="12" y="5" width="2" height="1" fill="#e0e0e0"/><rect x="14" y="5" width="1" height="1" fill="#b0b0b0"/><rect x="15" y="5" width="1" height="1" fill="#000"/><rect x="0" y="6" width="1" height="1" fill="#a4a4a4"/><rect x="1" y="6" width="13" height="1" fill="#f8f8f8"/><rect x="14" y="6" width="1" height="1" fill="#b0b0b0"/><rect x="15" y="6" width="1" height="1" fill="#000"/><rect x="0" y="7" width="1" height="1" fill="#a4a4a4"/><rect x="1" y="7" width="13" height="1" fill="#bcbcbc"/><rect x="14" y="7" width="2" height="1" fill="#000"/><rect x="1" y="8" width="14" height="1" fill="#000"/></svg>
<div class="t " style="left:229px;top:139px;;letter-spacing:-0.19px">Systém (C:)</div>
<div class="t " style="left:296px;top:139px;;letter-spacing:-0.66px">Oddíl</div>
<div class="t " style="left:355px;top:139px;;letter-spacing:-0.40px">Základní</div>
<div class="t " style="left:406px;top:139px;;letter-spacing:-1.18px">NTFS</div>
<div class="t " style="left:495px;top:139px;;letter-spacing:-0.18px">V pořádku (Systém)</div>
<div class="t " style="left:601px;top:139px;;letter-spacing:-0.43px">24,41 GB</div>
<div class="t " style="left:663px;top:139px;;letter-spacing:-0.48px">5,73 GB</div>
<div class="t " style="left:730px;top:139px;;letter-spacing:-0.02px">23 %</div>
<div class="t " style="left:821px;top:139px;;letter-spacing:-0.24px">Žádné</div>
<div class="t " style="left:941px;top:139px;;letter-spacing:0.05px">0%</div>
<svg style="left:212px;top:156px" width="16" height="9" shape-rendering="crispEdges"><rect x="2" y="0" width="13" height="1" fill="#8c8c8c"/><rect x="1" y="1" width="1" height="1" fill="#a4a4a4"/><rect x="2" y="1" width="12" height="1" fill="#e0e0e0"/><rect x="14" y="1" width="1" height="1" fill="#8c8c8c"/><rect x="15" y="1" width="1" height="1" fill="#000"/><rect x="0" y="2" width="1" height="1" fill="#a4a4a4"/><rect x="1" y="2" width="13" height="1" fill="#f8f8f8"/><rect x="14" y="2" width="1" height="1" fill="#b0b0b0"/><rect x="15" y="2" width="1" height="1" fill="#000"/><rect x="0" y="3" width="1" height="1" fill="#a4a4a4"/><rect x="1" y="3" width="1" height="1" fill="#e0e0e0"/><rect x="2" y="3" width="9" height="1" fill="#bcbcbc"/><rect x="11" y="3" width="1" height="1" fill="#606060"/><rect x="12" y="3" width="2" height="1" fill="#e0e0e0"/><rect x="14" y="3" width="1" height="1" fill="#b0b0b0"/><rect x="15" y="3" width="1" height="1" fill="#000"/><rect x="0" y="4" width="1" height="1" fill="#a4a4a4"/><rect x="1" y="4" width="13" height="1" fill="#e0e0e0"/><rect x="14" y="4" width="1" height="1" fill="#b0b0b0"/><rect x="15" y="4" width="1" height="1" fill="#000"/><rect x="0" y="5" width="1" height="1" fill="#a4a4a4"/><rect x="1" y="5" width="1" height="1" fill="#e0e0e0"/><rect x="2" y="5" width="10" height="1" fill="#606060"/><rect x="12" y="5" width="2" height="1" fill="#e0e0e0"/><rect x="14" y="5" width="1" height="1" fill="#b0b0b0"/><rect x="15" y="5" width="1" height="1" fill="#000"/><rect x="0" y="6" width="1" height="1" fill="#a4a4a4"/><rect x="1" y="6" width="13" height="1" fill="#f8f8f8"/><rect x="14" y="6" width="1" height="1" fill="#b0b0b0"/><rect x="15" y="6" width="1" height="1" fill="#000"/><rect x="0" y="7" width="1" height="1" fill="#a4a4a4"/><rect x="1" y="7" width="13" height="1" fill="#bcbcbc"/><rect x="14" y="7" width="2" height="1" fill="#000"/><rect x="1" y="8" width="14" height="1" fill="#000"/></svg>
<div class="t " style="left:229px;top:156px;;letter-spacing:-0.10px">1TBdisk (I:)</div>
<div class="t " style="left:296px;top:156px;;letter-spacing:-0.66px">Oddíl</div>
<div class="t " style="left:355px;top:156px;;letter-spacing:-0.40px">Základní</div>
<div class="t " style="left:406px;top:156px;;letter-spacing:-1.18px">NTFS</div>
<div class="t " style="left:495px;top:156px;;letter-spacing:-0.24px">V pořádku</div>
<div class="t " style="left:601px;top:156px;;letter-spacing:-0.40px">931,51 GB</div>
<div class="t " style="left:663px;top:156px;;letter-spacing:-0.43px">40,82 GB</div>
<div class="t " style="left:730px;top:156px;;letter-spacing:0.02px">4 %</div>
<div class="t " style="left:821px;top:156px;;letter-spacing:-0.24px">Žádné</div>
<div class="t " style="left:941px;top:156px;;letter-spacing:0.05px">0%</div>
<svg style="left:212px;top:173px" width="16" height="9" shape-rendering="crispEdges"><rect x="2" y="0" width="13" height="1" fill="#8c8c8c"/><rect x="1" y="1" width="1" height="1" fill="#a4a4a4"/><rect x="2" y="1" width="12" height="1" fill="#e0e0e0"/><rect x="14" y="1" width="1" height="1" fill="#8c8c8c"/><rect x="15" y="1" width="1" height="1" fill="#000"/><rect x="0" y="2" width="1" height="1" fill="#a4a4a4"/><rect x="1" y="2" width="13" height="1" fill="#f8f8f8"/><rect x="14" y="2" width="1" height="1" fill="#b0b0b0"/><rect x="15" y="2" width="1" height="1" fill="#000"/><rect x="0" y="3" width="1" height="1" fill="#a4a4a4"/><rect x="1" y="3" width="1" height="1" fill="#e0e0e0"/><rect x="2" y="3" width="9" height="1" fill="#bcbcbc"/><rect x="11" y="3" width="1" height="1" fill="#606060"/><rect x="12" y="3" width="2" height="1" fill="#e0e0e0"/><rect x="14" y="3" width="1" height="1" fill="#b0b0b0"/><rect x="15" y="3" width="1" height="1" fill="#000"/><rect x="0" y="4" width="1" height="1" fill="#a4a4a4"/><rect x="1" y="4" width="13" height="1" fill="#e0e0e0"/><rect x="14" y="4" width="1" height="1" fill="#b0b0b0"/><rect x="15" y="4" width="1" height="1" fill="#000"/><rect x="0" y="5" width="1" height="1" fill="#a4a4a4"/><rect x="1" y="5" width="1" height="1" fill="#e0e0e0"/><rect x="2" y="5" width="10" height="1" fill="#606060"/><rect x="12" y="5" width="2" height="1" fill="#e0e0e0"/><rect x="14" y="5" width="1" height="1" fill="#b0b0b0"/><rect x="15" y="5" width="1" height="1" fill="#000"/><rect x="0" y="6" width="1" height="1" fill="#a4a4a4"/><rect x="1" y="6" width="13" height="1" fill="#f8f8f8"/><rect x="14" y="6" width="1" height="1" fill="#b0b0b0"/><rect x="15" y="6" width="1" height="1" fill="#000"/><rect x="0" y="7" width="1" height="1" fill="#a4a4a4"/><rect x="1" y="7" width="13" height="1" fill="#bcbcbc"/><rect x="14" y="7" width="2" height="1" fill="#000"/><rect x="1" y="8" width="14" height="1" fill="#000"/></svg>
<div class="t " style="left:229px;top:173px;;letter-spacing:-0.30px">400GB (E:)</div>
<div class="t " style="left:296px;top:173px;;letter-spacing:-0.66px">Oddíl</div>
<div class="t " style="left:355px;top:173px;;letter-spacing:-0.40px">Základní</div>
<div class="t " style="left:406px;top:173px;;letter-spacing:-1.18px">NTFS</div>
<div class="t " style="left:495px;top:173px;;letter-spacing:-0.24px">V pořádku</div>
<div class="t " style="left:601px;top:173px;;letter-spacing:-0.40px">372,61 GB</div>
<div class="t " style="left:663px;top:173px;;letter-spacing:-0.48px">7,01 GB</div>
<div class="t " style="left:730px;top:173px;;letter-spacing:0.02px">1 %</div>
<div class="t " style="left:821px;top:173px;;letter-spacing:-0.24px">Žádné</div>
<div class="t " style="left:941px;top:173px;;letter-spacing:0.05px">0%</div>
<div class="a" style="left:986px;top:256px;width:1px;height:6px;background:#85837a"></div>
<div class="a" style="left:209px;top:261px;width:778px;height:1px;background:#85837a"></div>
<div class="a" style="left:210px;top:262px;width:1px;height:603px;background:#fff"></div>
<div class="a" style="left:210px;top:266px;width:156px;height:1px;background:#fff"></div>
<div class="a" style="left:210px;top:266px;width:1px;height:71px;background:#fff"></div>
<div class="a" style="left:210px;top:336px;width:156px;height:1px;background:#aca899"></div>
<div class="a" style="left:365px;top:266px;width:1px;height:71px;background:#aca899"></div>
<div class="a" style="left:364px;top:267px;width:1px;height:69px;background:#fbfaf5"></div>
<div class="a" style="left:366px;top:266px;width:581px;height:1px;background:#fff"></div>
<div class="a" style="left:366px;top:266px;width:1px;height:71px;background:#fff"></div>
<div class="a" style="left:366px;top:336px;width:581px;height:1px;background:#aca899"></div>
<div class="a" style="left:946px;top:266px;width:1px;height:71px;background:#aca899"></div>
<div class="a" style="left:367px;top:270px;width:576px;height:1px;background:#fff"></div>
<div class="a" style="left:367px;top:270px;width:1px;height:63px;background:#fff"></div>
<div class="a" style="left:367px;top:332px;width:576px;height:1px;background:#aca899"></div>
<div class="a" style="left:942px;top:270px;width:1px;height:63px;background:#aca899"></div>
<svg style="left:220px;top:273px" width="16" height="11" shape-rendering="crispEdges"><rect x="2" y="0" width="14" height="1" fill="#7c827c"/><rect x="1" y="1" width="13" height="1" fill="#a8aea8"/><rect x="14" y="1" width="2" height="1" fill="#000"/><rect x="0" y="2" width="13" height="1" fill="#a8aea8"/><rect x="13" y="2" width="1" height="1" fill="#000"/><rect x="14" y="2" width="1" height="1" fill="#d8dcd6"/><rect x="15" y="2" width="1" height="1" fill="#000"/><rect x="0" y="3" width="1" height="1" fill="#a8aea8"/><rect x="1" y="3" width="12" height="1" fill="#d8dcd6"/><rect x="13" y="3" width="3" height="1" fill="#000"/><rect x="0" y="4" width="4" height="1" fill="#a8aea8"/><rect x="4" y="4" width="6" height="1" fill="#000"/><rect x="10" y="4" width="3" height="1" fill="#a8aea8"/><rect x="13" y="4" width="1" height="1" fill="#000"/><rect x="14" y="4" width="1" height="1" fill="#d8dcd6"/><rect x="15" y="4" width="1" height="1" fill="#000"/><rect x="0" y="5" width="1" height="1" fill="#a8aea8"/><rect x="1" y="5" width="3" height="1" fill="#000"/><rect x="4" y="5" width="3" height="1" fill="#a8aea8"/><rect x="7" y="5" width="2" height="1" fill="#dcd488"/><rect x="9" y="5" width="4" height="1" fill="#a8aea8"/><rect x="13" y="5" width="3" height="1" fill="#000"/><rect x="0" y="6" width="3" height="1" fill="#000"/><rect x="3" y="6" width="4" height="1" fill="#a8aea8"/><rect x="7" y="6" width="2" height="1" fill="#dcd488"/><rect x="9" y="6" width="4" height="1" fill="#a8aea8"/><rect x="13" y="6" width="1" height="1" fill="#000"/><rect x="14" y="6" width="1" height="1" fill="#d8dcd6"/><rect x="15" y="6" width="1" height="1" fill="#000"/><rect x="0" y="7" width="2" height="1" fill="#000"/><rect x="2" y="7" width="5" height="1" fill="#d8dcd6"/><rect x="7" y="7" width="2" height="1" fill="#dcd488"/><rect x="9" y="7" width="4" height="1" fill="#d8dcd6"/><rect x="13" y="7" width="2" height="1" fill="#000"/><rect x="1" y="8" width="6" height="1" fill="#000"/><rect x="7" y="8" width="2" height="1" fill="#dcd488"/><rect x="9" y="8" width="5" height="1" fill="#000"/><rect x="4" y="9" width="3" height="1" fill="#000"/><rect x="7" y="9" width="2" height="1" fill="#dcd488"/><rect x="9" y="9" width="1" height="1" fill="#000"/><rect x="7" y="10" width="2" height="1" fill="#000"/></svg>
<div class="t b" style="left:237px;top:274px;;letter-spacing:0.27px">Disk 0</div>
<div class="t " style="left:219px;top:287px;;letter-spacing:-0.40px">Základní</div>
<div class="t " style="left:219px;top:300px;;letter-spacing:-0.40px">372,61 GB</div>
<div class="t " style="left:219px;top:313px;;letter-spacing:-0.47px">Online</div>
<div class="a" style="left:210px;top:337px;width:156px;height:1px;background:#fff"></div>
<div class="a" style="left:210px;top:337px;width:1px;height:71px;background:#fff"></div>
<div class="a" style="left:210px;top:407px;width:156px;height:1px;background:#aca899"></div>
<div class="a" style="left:365px;top:337px;width:1px;height:71px;background:#aca899"></div>
<div class="a" style="left:364px;top:338px;width:1px;height:69px;background:#fbfaf5"></div>
<div class="a" style="left:366px;top:337px;width:550px;height:1px;background:#fff"></div>
<div class="a" style="left:366px;top:337px;width:1px;height:71px;background:#fff"></div>
<div class="a" style="left:366px;top:407px;width:550px;height:1px;background:#aca899"></div>
<div class="a" style="left:915px;top:337px;width:1px;height:71px;background:#aca899"></div>
<div class="a" style="left:367px;top:341px;width:545px;height:1px;background:#fff"></div>
<div class="a" style="left:367px;top:341px;width:1px;height:63px;background:#fff"></div>
<div class="a" style="left:367px;top:403px;width:545px;height:1px;background:#aca899"></div>
<div class="a" style="left:911px;top:341px;width:1px;height:63px;background:#aca899"></div>
<svg style="left:220px;top:344px" width="16" height="11" shape-rendering="crispEdges"><rect x="2" y="0" width="14" height="1" fill="#7c827c"/><rect x="1" y="1" width="13" height="1" fill="#a8aea8"/><rect x="14" y="1" width="2" height="1" fill="#000"/><rect x="0" y="2" width="13" height="1" fill="#a8aea8"/><rect x="13" y="2" width="1" height="1" fill="#000"/><rect x="14" y="2" width="1" height="1" fill="#d8dcd6"/><rect x="15" y="2" width="1" height="1" fill="#000"/><rect x="0" y="3" width="1" height="1" fill="#a8aea8"/><rect x="1" y="3" width="12" height="1" fill="#d8dcd6"/><rect x="13" y="3" width="3" height="1" fill="#000"/><rect x="0" y="4" width="4" height="1" fill="#a8aea8"/><rect x="4" y="4" width="6" height="1" fill="#000"/><rect x="10" y="4" width="3" height="1" fill="#a8aea8"/><rect x="13" y="4" width="1" height="1" fill="#000"/><rect x="14" y="4" width="1" height="1" fill="#d8dcd6"/><rect x="15" y="4" width="1" height="1" fill="#000"/><rect x="0" y="5" width="1" height="1" fill="#a8aea8"/><rect x="1" y="5" width="3" height="1" fill="#000"/><rect x="4" y="5" width="3" height="1" fill="#a8aea8"/><rect x="7" y="5" width="2" height="1" fill="#dcd488"/><rect x="9" y="5" width="4" height="1" fill="#a8aea8"/><rect x="13" y="5" width="3" height="1" fill="#000"/><rect x="0" y="6" width="3" height="1" fill="#000"/><rect x="3" y="6" width="4" height="1" fill="#a8aea8"/><rect x="7" y="6" width="2" height="1" fill="#dcd488"/><rect x="9" y="6" width="4" height="1" fill="#a8aea8"/><rect x="13" y="6" width="1" height="1" fill="#000"/><rect x="14" y="6" width="1" height="1" fill="#d8dcd6"/><rect x="15" y="6" width="1" height="1" fill="#000"/><rect x="0" y="7" width="2" height="1" fill="#000"/><rect x="2" y="7" width="5" height="1" fill="#d8dcd6"/><rect x="7" y="7" width="2" height="1" fill="#dcd488"/><rect x="9" y="7" width="4" height="1" fill="#d8dcd6"/><rect x="13" y="7" width="2" height="1" fill="#000"/><rect x="1" y="8" width="6" height="1" fill="#000"/><rect x="7" y="8" width="2" height="1" fill="#dcd488"/><rect x="9" y="8" width="5" height="1" fill="#000"/><rect x="4" y="9" width="3" height="1" fill="#000"/><rect x="7" y="9" width="2" height="1" fill="#dcd488"/><rect x="9" y="9" width="1" height="1" fill="#000"/><rect x="7" y="10" width="2" height="1" fill="#000"/></svg>
<div class="t b" style="left:237px;top:345px;;letter-spacing:0.27px">Disk 1</div>
<div class="t " style="left:219px;top:358px;;letter-spacing:-0.40px">Základní</div>
<div class="t " style="left:219px;top:371px;;letter-spacing:-0.40px">186,30 GB</div>
<div class="t " style="left:219px;top:384px;;letter-spacing:-0.47px">Online</div>
<div class="a" style="left:210px;top:408px;width:156px;height:1px;background:#fff"></div>
<div class="a" style="left:210px;top:408px;width:1px;height:71px;background:#fff"></div>
<div class="a" style="left:210px;top:478px;width:156px;height:1px;background:#aca899"></div>
<div class="a" style="left:365px;top:408px;width:1px;height:71px;background:#aca899"></div>
<div class="a" style="left:364px;top:409px;width:1px;height:69px;background:#fbfaf5"></div>
<div class="a" style="left:366px;top:408px;width:623px;height:1px;background:#fff"></div>
<div class="a" style="left:366px;top:408px;width:1px;height:71px;background:#fff"></div>
<div class="a" style="left:366px;top:478px;width:623px;height:1px;background:#aca899"></div>
<div class="a" style="left:988px;top:408px;width:1px;height:71px;background:#aca899"></div>
<div class="a" style="left:367px;top:412px;width:618px;height:1px;background:#fff"></div>
<div class="a" style="left:367px;top:412px;width:1px;height:63px;background:#fff"></div>
<div class="a" style="left:367px;top:474px;width:618px;height:1px;background:#aca899"></div>
<div class="a" style="left:984px;top:412px;width:1px;height:63px;background:#aca899"></div>
<svg style="left:220px;top:415px" width="16" height="8" shape-rendering="crispEdges"><rect x="2" y="0" width="14" height="1" fill="#7c827c"/><rect x="1" y="1" width="13" height="1" fill="#a8aea8"/><rect x="14" y="1" width="2" height="1" fill="#000"/><rect x="0" y="2" width="13" height="1" fill="#a8aea8"/><rect x="13" y="2" width="1" height="1" fill="#000"/><rect x="14" y="2" width="1" height="1" fill="#d8dcd6"/><rect x="15" y="2" width="1" height="1" fill="#000"/><rect x="0" y="3" width="1" height="1" fill="#a8aea8"/><rect x="1" y="3" width="12" height="1" fill="#d8dcd6"/><rect x="13" y="3" width="3" height="1" fill="#000"/><rect x="0" y="4" width="4" height="1" fill="#a8aea8"/><rect x="4" y="4" width="6" height="1" fill="#000"/><rect x="10" y="4" width="3" height="1" fill="#a8aea8"/><rect x="13" y="4" width="1" height="1" fill="#000"/><rect x="14" y="4" width="1" height="1" fill="#d8dcd6"/><rect x="15" y="4" width="1" height="1" fill="#000"/><rect x="0" y="5" width="1" height="1" fill="#a8aea8"/><rect x="1" y="5" width="3" height="1" fill="#000"/><rect x="4" y="5" width="3" height="1" fill="#a8aea8"/><rect x="7" y="5" width="2" height="1" fill="#dcd488"/><rect x="9" y="5" width="4" height="1" fill="#a8aea8"/><rect x="13" y="5" width="3" height="1" fill="#000"/><rect x="0" y="6" width="3" height="1" fill="#000"/><rect x="3" y="6" width="4" height="1" fill="#a8aea8"/><rect x="7" y="6" width="2" height="1" fill="#dcd488"/><rect x="9" y="6" width="4" height="1" fill="#a8aea8"/><rect x="13" y="6" width="1" height="1" fill="#000"/><rect x="14" y="6" width="1" height="1" fill="#d8dcd6"/><rect x="15" y="6" width="1" height="1" fill="#000"/><rect x="0" y="7" width="2" height="1" fill="#000"/><rect x="2" y="7" width="5" height="1" fill="#d8dcd6"/><rect x="7" y="7" width="2" height="1" fill="#dcd488"/><rect x="9" y="7" width="4" height="1" fill="#d8dcd6"/><rect x="13" y="7" width="2" height="1" fill="#000"/></svg>
<svg style="left:225px;top:416px" width="12" height="12" viewBox="0 0 12 12"><circle cx="5.8" cy="6" r="5.3" fill="#e01010" stroke="#b00808" stroke-width="0.8"/><rect x="2" y="4.6" width="7.6" height="2.8" fill="#fff"/></svg>
<div class="t b" style="left:237px;top:416px;;letter-spacing:0.27px">Disk 2</div>
<div class="t " style="left:219px;top:429px;;letter-spacing:-0.35px">Neznámý</div>
<div class="t " style="left:219px;top:442px;;letter-spacing:-0.40px">931,51 GB</div>
<div class="t " style="left:219px;top:455px;;letter-spacing:-0.28px">Neinicializováno</div>
<div class="a" style="left:210px;top:479px;width:156px;height:1px;background:#fff"></div>
<div class="a" style="left:210px;top:479px;width:1px;height:71px;background:#fff"></div>
<div class="a" style="left:210px;top:549px;width:156px;height:1px;background:#aca899"></div>
<div class="a" style="left:365px;top:479px;width:1px;height:71px;background:#aca899"></div>
<div class="a" style="left:364px;top:480px;width:1px;height:69px;background:#fbfaf5"></div>
<div class="a" style="left:366px;top:479px;width:623px;height:1px;background:#fff"></div>
<div class="a" style="left:366px;top:479px;width:1px;height:71px;background:#fff"></div>
<div class="a" style="left:366px;top:549px;width:623px;height:1px;background:#aca899"></div>
<div class="a" style="left:988px;top:479px;width:1px;height:71px;background:#aca899"></div>
<div class="a" style="left:367px;top:483px;width:618px;height:1px;background:#fff"></div>
<div class="a" style="left:367px;top:483px;width:1px;height:63px;background:#fff"></div>
<div class="a" style="left:367px;top:545px;width:618px;height:1px;background:#aca899"></div>
<div class="a" style="left:984px;top:483px;width:1px;height:63px;background:#aca899"></div>
<svg style="left:220px;top:486px" width="16" height="8" shape-rendering="crispEdges"><rect x="2" y="0" width="14" height="1" fill="#7c827c"/><rect x="1" y="1" width="13" height="1" fill="#a8aea8"/><rect x="14" y="1" width="2" height="1" fill="#000"/><rect x="0" y="2" width="13" height="1" fill="#a8aea8"/><rect x="13" y="2" width="1" height="1" fill="#000"/><rect x="14" y="2" width="1" height="1" fill="#d8dcd6"/><rect x="15" y="2" width="1" height="1" fill="#000"/><rect x="0" y="3" width="1" height="1" fill="#a8aea8"/><rect x="1" y="3" width="12" height="1" fill="#d8dcd6"/><rect x="13" y="3" width="3" height="1" fill="#000"/><rect x="0" y="4" width="4" height="1" fill="#a8aea8"/><rect x="4" y="4" width="6" height="1" fill="#000"/><rect x="10" y="4" width="3" height="1" fill="#a8aea8"/><rect x="13" y="4" width="1" height="1" fill="#000"/><rect x="14" y="4" width="1" height="1" fill="#d8dcd6"/><rect x="15" y="4" width="1" height="1" fill="#000"/><rect x="0" y="5" width="1" height="1" fill="#a8aea8"/><rect x="1" y="5" width="3" height="1" fill="#000"/><rect x="4" y="5" width="3" height="1" fill="#a8aea8"/><rect x="7" y="5" width="2" height="1" fill="#dcd488"/><rect x="9" y="5" width="4" height="1" fill="#a8aea8"/><rect x="13" y="5" width="3" height="1" fill="#000"/><rect x="0" y="6" width="3" height="1" fill="#000"/><rect x="3" y="6" width="4" height="1" fill="#a8aea8"/><rect x="7" y="6" width="2" height="1" fill="#dcd488"/><rect x="9" y="6" width="4" height="1" fill="#a8aea8"/><rect x="13" y="6" width="1" height="1" fill="#000"/><rect x="14" y="6" width="1" height="1" fill="#d8dcd6"/><rect x="15" y="6" width="1" height="1" fill="#000"/><rect x="0" y="7" width="2" height="1" fill="#000"/><rect x="2" y="7" width="5" height="1" fill="#d8dcd6"/><rect x="7" y="7" width="2" height="1" fill="#dcd488"/><rect x="9" y="7" width="4" height="1" fill="#d8dcd6"/><rect x="13" y="7" width="2" height="1" fill="#000"/></svg>
<svg style="left:225px;top:487px" width="12" height="12" viewBox="0 0 12 12"><circle cx="5.8" cy="6" r="5.3" fill="#e01010" stroke="#b00808" stroke-width="0.8"/><rect x="2" y="4.6" width="7.6" height="2.8" fill="#fff"/></svg>
<div class="t b" style="left:237px;top:487px;;letter-spacing:0.27px">Disk 3</div>
<div class="t " style="left:219px;top:500px;;letter-spacing:-0.35px">Neznámý</div>
<div class="t " style="left:219px;top:513px;;letter-spacing:-0.40px">931,51 GB</div>
<div class="t " style="left:219px;top:526px;;letter-spacing:-0.28px">Neinicializováno</div>
<div class="a" style="left:210px;top:550px;width:156px;height:1px;background:#fff"></div>
<div class="a" style="left:210px;top:550px;width:1px;height:71px;background:#fff"></div>
<div class="a" style="left:210px;top:620px;width:156px;height:1px;background:#aca899"></div>
<div class="a" style="left:365px;top:550px;width:1px;height:71px;background:#aca899"></div>
<div class="a" style="left:364px;top:551px;width:1px;height:69px;background:#fbfaf5"></div>
<div class="a" style="left:366px;top:550px;width:623px;height:1px;background:#fff"></div>
<div class="a" style="left:366px;top:550px;width:1px;height:71px;background:#fff"></div>
<div class="a" style="left:366px;top:620px;width:623px;height:1px;background:#aca899"></div>
<div class="a" style="left:988px;top:550px;width:1px;height:71px;background:#aca899"></div>
<div class="a" style="left:367px;top:554px;width:618px;height:1px;background:#fff"></div>
<div class="a" style="left:367px;top:554px;width:1px;height:63px;background:#fff"></div>
<div class="a" style="left:367px;top:616px;width:618px;height:1px;background:#aca899"></div>
<div class="a" style="left:984px;top:554px;width:1px;height:63px;background:#aca899"></div>
<svg style="left:220px;top:557px" width="16" height="11" shape-rendering="crispEdges"><rect x="2" y="0" width="14" height="1" fill="#7c827c"/><rect x="1" y="1" width="13" height="1" fill="#a8aea8"/><rect x="14" y="1" width="2" height="1" fill="#000"/><rect x="0" y="2" width="13" height="1" fill="#a8aea8"/><rect x="13" y="2" width="1" height="1" fill="#000"/><rect x="14" y="2" width="1" height="1" fill="#d8dcd6"/><rect x="15" y="2" width="1" height="1" fill="#000"/><rect x="0" y="3" width="1" height="1" fill="#a8aea8"/><rect x="1" y="3" width="12" height="1" fill="#d8dcd6"/><rect x="13" y="3" width="3" height="1" fill="#000"/><rect x="0" y="4" width="4" height="1" fill="#a8aea8"/><rect x="4" y="4" width="6" height="1" fill="#000"/><rect x="10" y="4" width="3" height="1" fill="#a8aea8"/><rect x="13" y="4" width="1" height="1" fill="#000"/><rect x="14" y="4" width="1" height="1" fill="#d8dcd6"/><rect x="15" y="4" width="1" height="1" fill="#000"/><rect x="0" y="5" width="1" height="1" fill="#a8aea8"/><rect x="1" y="5" width="3" height="1" fill="#000"/><rect x="4" y="5" width="3" height="1" fill="#a8aea8"/><rect x="7" y="5" width="2" height="1" fill="#dcd488"/><rect x="9" y="5" width="4" height="1" fill="#a8aea8"/><rect x="13" y="5" width="3" height="1" fill="#000"/><rect x="0" y="6" width="3" height="1" fill="#000"/><rect x="3" y="6" width="4" height="1" fill="#a8aea8"/><rect x="7" y="6" width="2" height="1" fill="#dcd488"/><rect x="9" y="6" width="4" height="1" fill="#a8aea8"/><rect x="13" y="6" width="1" height="1" fill="#000"/><rect x="14" y="6" width="1" height="1" fill="#d8dcd6"/><rect x="15" y="6" width="1" height="1" fill="#000"/><rect x="0" y="7" width="2" height="1" fill="#000"/><rect x="2" y="7" width="5" height="1" fill="#d8dcd6"/><rect x="7" y="7" width="2" height="1" fill="#dcd488"/><rect x="9" y="7" width="4" height="1" fill="#d8dcd6"/><rect x="13" y="7" width="2" height="1" fill="#000"/><rect x="1" y="8" width="6" height="1" fill="#000"/><rect x="7" y="8" width="2" height="1" fill="#dcd488"/><rect x="9" y="8" width="5" height="1" fill="#000"/><rect x="4" y="9" width="3" height="1" fill="#000"/><rect x="7" y="9" width="2" height="1" fill="#dcd488"/><rect x="9" y="9" width="1" height="1" fill="#000"/><rect x="7" y="10" width="2" height="1" fill="#000"/></svg>
<div class="t b" style="left:237px;top:558px;;letter-spacing:0.27px">Disk 4</div>
<div class="t " style="left:219px;top:571px;;letter-spacing:-0.40px">Základní</div>
<div class="t " style="left:219px;top:584px;;letter-spacing:-0.40px">931,51 GB</div>
<div class="t " style="left:219px;top:597px;;letter-spacing:-0.47px">Online</div>
<div class="a" style="left:210px;top:621px;width:156px;height:1px;background:#fff"></div>
<div class="a" style="left:210px;top:621px;width:1px;height:71px;background:#fff"></div>
<div class="a" style="left:210px;top:691px;width:156px;height:1px;background:#aca899"></div>
<div class="a" style="left:365px;top:621px;width:1px;height:71px;background:#aca899"></div>
<div class="a" style="left:364px;top:622px;width:1px;height:69px;background:#fbfaf5"></div>
<div class="a" style="left:366px;top:621px;width:560px;height:1px;background:#fff"></div>
<div class="a" style="left:366px;top:621px;width:1px;height:71px;background:#fff"></div>
<div class="a" style="left:366px;top:691px;width:560px;height:1px;background:#aca899"></div>
<div class="a" style="left:925px;top:621px;width:1px;height:71px;background:#aca899"></div>
<div class="a" style="left:367px;top:625px;width:555px;height:1px;background:#fff"></div>
<div class="a" style="left:367px;top:625px;width:1px;height:63px;background:#fff"></div>
<div class="a" style="left:367px;top:687px;width:555px;height:1px;background:#aca899"></div>
<div class="a" style="left:921px;top:625px;width:1px;height:63px;background:#aca899"></div>
<svg style="left:220px;top:628px" width="16" height="11" shape-rendering="crispEdges"><rect x="2" y="0" width="14" height="1" fill="#7c827c"/><rect x="1" y="1" width="13" height="1" fill="#a8aea8"/><rect x="14" y="1" width="2" height="1" fill="#000"/><rect x="0" y="2" width="13" height="1" fill="#a8aea8"/><rect x="13" y="2" width="1" height="1" fill="#000"/><rect x="14" y="2" width="1" height="1" fill="#d8dcd6"/><rect x="15" y="2" width="1" height="1" fill="#000"/><rect x="0" y="3" width="1" height="1" fill="#a8aea8"/><rect x="1" y="3" width="12" height="1" fill="#d8dcd6"/><rect x="13" y="3" width="3" height="1" fill="#000"/><rect x="0" y="4" width="4" height="1" fill="#a8aea8"/><rect x="4" y="4" width="6" height="1" fill="#000"/><rect x="10" y="4" width="3" height="1" fill="#a8aea8"/><rect x="13" y="4" width="1" height="1" fill="#000"/><rect x="14" y="4" width="1" height="1" fill="#d8dcd6"/><rect x="15" y="4" width="1" height="1" fill="#000"/><rect x="0" y="5" width="1" height="1" fill="#a8aea8"/><rect x="1" y="5" width="3" height="1" fill="#000"/><rect x="4" y="5" width="3" height="1" fill="#a8aea8"/><rect x="7" y="5" width="2" height="1" fill="#dcd488"/><rect x="9" y="5" width="4" height="1" fill="#a8aea8"/><rect x="13" y="5" width="3" height="1" fill="#000"/><rect x="0" y="6" width="3" height="1" fill="#000"/><rect x="3" y="6" width="4" height="1" fill="#a8aea8"/><rect x="7" y="6" width="2" height="1" fill="#dcd488"/><rect x="9" y="6" width="4" height="1" fill="#a8aea8"/><rect x="13" y="6" width="1" height="1" fill="#000"/><rect x="14" y="6" width="1" height="1" fill="#d8dcd6"/><rect x="15" y="6" width="1" height="1" fill="#000"/><rect x="0" y="7" width="2" height="1" fill="#000"/><rect x="2" y="7" width="5" height="1" fill="#d8dcd6"/><rect x="7" y="7" width="2" height="1" fill="#dcd488"/><rect x="9" y="7" width="4" height="1" fill="#d8dcd6"/><rect x="13" y="7" width="2" height="1" fill="#000"/><rect x="1" y="8" width="6" height="1" fill="#000"/><rect x="7" y="8" width="2" height="1" fill="#dcd488"/><rect x="9" y="8" width="5" height="1" fill="#000"/><rect x="4" y="9" width="3" height="1" fill="#000"/><rect x="7" y="9" width="2" height="1" fill="#dcd488"/><rect x="9" y="9" width="1" height="1" fill="#000"/><rect x="7" y="10" width="2" height="1" fill="#000"/></svg>
<div class="t b" style="left:237px;top:629px;;letter-spacing:0.27px">Disk 5</div>
<div class="t " style="left:219px;top:642px;;letter-spacing:-0.40px">Základní</div>
<div class="t " style="left:219px;top:655px;;letter-spacing:-0.40px">232,88 GB</div>
<div class="t " style="left:219px;top:668px;;letter-spacing:-0.47px">Online</div>
<div class="a" style="left:210px;top:692px;width:156px;height:1px;background:#fff"></div>
<div class="a" style="left:210px;top:692px;width:1px;height:71px;background:#fff"></div>
<div class="a" style="left:210px;top:762px;width:156px;height:1px;background:#aca899"></div>
<div class="a" style="left:365px;top:692px;width:1px;height:71px;background:#aca899"></div>
<div class="a" style="left:364px;top:693px;width:1px;height:69px;background:#fbfaf5"></div>
<div class="a" style="left:366px;top:692px;width:622px;height:1px;background:#fff"></div>
<div class="a" style="left:366px;top:692px;width:1px;height:71px;background:#fff"></div>
<div class="a" style="left:366px;top:762px;width:621px;height:1px;background:#aca899"></div>
<svg style="left:219px;top:696px" width="17" height="16" viewBox="0 0 17 16">
<defs><linearGradient id="cdg" x1="0" y1="0" x2="1" y2="1"><stop offset="0" stop-color="#20a040"/><stop offset="0.45" stop-color="#a0e080"/><stop offset="0.7" stop-color="#d8e8e0"/><stop offset="1" stop-color="#b8c8c0"/></linearGradient></defs>
<circle cx="11.5" cy="6" r="5.2" fill="url(#cdg)"/><path d="M15.5 3 L15.5 8" stroke="#000"/>
<path d="M0.5 8.5 L7 8.5 L9 11 L15 11 L15.5 15.5 L0.5 15.5Z" fill="#e8ece8" stroke="#707070"/>
<path d="M1 15.5 L15 15.5 M15.5 10 L15.5 15" stroke="#000"/>
<path d="M3 12.5 L13 12.5" stroke="#000" stroke-width="1.2"/>
<circle cx="11.5" cy="6" r="1.4" fill="#fff" stroke="#000" stroke-width="1"/></svg>
<div class="t b" style="left:237px;top:700px;;letter-spacing:0.31px">Jednotka CD-ROM 0</div>
<div class="t " style="left:219px;top:713px;;letter-spacing:-0.39px">Disk DVD (H:)</div>
<div class="t " style="left:219px;top:739px;;letter-spacing:-0.36px">Žádné médium</div>
<div class="a" style="left:210px;top:763px;width:156px;height:1px;background:#fff"></div>
<div class="a" style="left:210px;top:763px;width:1px;height:71px;background:#fff"></div>
<div class="a" style="left:210px;top:833px;width:156px;height:1px;background:#aca899"></div>
<div class="a" style="left:365px;top:763px;width:1px;height:71px;background:#aca899"></div>
<div class="a" style="left:364px;top:764px;width:1px;height:69px;background:#fbfaf5"></div>
<div class="a" style="left:366px;top:763px;width:622px;height:1px;background:#fff"></div>
<div class="a" style="left:366px;top:763px;width:1px;height:71px;background:#fff"></div>
<div class="a" style="left:366px;top:833px;width:621px;height:1px;background:#aca899"></div>
<svg style="left:219px;top:767px" width="17" height="16" viewBox="0 0 17 16">
<defs><linearGradient id="cdg" x1="0" y1="0" x2="1" y2="1"><stop offset="0" stop-color="#20a040"/><stop offset="0.45" stop-color="#a0e080"/><stop offset="0.7" stop-color="#d8e8e0"/><stop offset="1" stop-color="#b8c8c0"/></linearGradient></defs>
<circle cx="11.5" cy="6" r="5.2" fill="url(#cdg)"/><path d="M15.5 3 L15.5 8" stroke="#000"/>
<path d="M0.5 8.5 L7 8.5 L9 11 L15 11 L15.5 15.5 L0.5 15.5Z" fill="#e8ece8" stroke="#707070"/>
<path d="M1 15.5 L15 15.5 M15.5 10 L15.5 15" stroke="#000"/>
<path d="M3 12.5 L13 12.5" stroke="#000" stroke-width="1.2"/>
<circle cx="11.5" cy="6" r="1.4" fill="#fff" stroke="#000" stroke-width="1"/></svg>
<div class="t b" style="left:237px;top:771px;;letter-spacing:0.31px">Jednotka CD-ROM 1</div>
<div class="t " style="left:219px;top:784px;;letter-spacing:-0.45px">Disk DVD (F:)</div>
<div class="t " style="left:219px;top:810px;;letter-spacing:-0.36px">Žádné médium</div>
<div class="a" style="left:367px;top:270px;width:575px;height:12px;background:#000080;border:1px solid;border-color:#fff #c6c6e8 #c6c6e8 #fff"></div>
<div class="a" style="left:371px;top:285px;width:567px;height:44px;background:#fff;border-top:1px solid #aca899;border-left:1px solid #aca899"></div>
<div class="t b" style="left:375px;top:289px;;letter-spacing:0.43px">400GB  (E:)</div>
<div class="t " style="left:375px;top:302px;;letter-spacing:-0.60px">372,61 GB NTFS</div>
<div class="t " style="left:375px;top:315px;;letter-spacing:-0.24px">V pořádku</div>
<div class="a" style="left:367px;top:341px;width:248px;height:12px;background:#000080;border:1px solid;border-color:#fff #c6c6e8 #c6c6e8 #fff"></div>
<div class="a" style="left:371px;top:356px;width:240px;height:44px;background:#fff;border-top:1px solid #aca899;border-left:1px solid #aca899"></div>
<div class="t b" style="left:375px;top:360px;;letter-spacing:0.49px">Systém  (C:)</div>
<div class="t " style="left:375px;top:373px;;letter-spacing:-0.63px">24,41 GB NTFS</div>
<div class="t " style="left:375px;top:386px;;letter-spacing:-0.18px">V pořádku (Systém)</div>
<div class="a" style="left:615px;top:338px;width:298px;height:69px;border:1px solid #c8f8c8"></div>
<div class="a" style="left:616px;top:339px;width:296px;height:67px;border:solid #108010;border-width:2px 4px 2px 4px"></div>
<div class="a" style="left:620px;top:341px;width:288px;height:63px;border:1px solid #c8f8c8"></div>
<div class="a" style="left:620px;top:341px;width:287px;height:12px;background:#0000ff;border:1px solid;border-color:#c8f8ff #c8c8f8 #c8c8f8 #c8f8ff"></div>
<div class="a" style="left:620px;top:354px;width:286px;height:48px;background:#bab6aa"></div>
<svg style="left:624px;top:357px" width="279" height="42" shape-rendering="crispEdges"><defs><pattern id="hp" width="8" height="8" patternUnits="userSpaceOnUse"><g fill="#9c9c9c"><rect x="0" y="7" width="1" height="1"/><rect x="1" y="6" width="1" height="1"/><rect x="2" y="5" width="1" height="1"/><rect x="3" y="4" width="1" height="1"/><rect x="4" y="3" width="1" height="1"/><rect x="5" y="2" width="1" height="1"/><rect x="6" y="1" width="1" height="1"/><rect x="7" y="0" width="1" height="1"/></g></pattern></defs><rect width="279" height="42" fill="#fff"/><rect width="279" height="42" fill="url(#hp)"/></svg>
<div class="t b" style="left:628px;top:360px;background:#fff;letter-spacing:0.61px">Data  (D:)</div>
<div class="t " style="left:628px;top:373px;background:#fff;letter-spacing:-0.60px">161,89 GB NTFS</div>
<div class="t " style="left:628px;top:386px;background:#fff;letter-spacing:-0.24px">V pořádku</div>
<div class="a" style="left:367px;top:412px;width:617px;height:12px;background:#000;border:1px solid;border-color:#fff #c6c6e8 #c6c6e8 #fff"></div>
<div class="a" style="left:371px;top:427px;width:609px;height:44px;background:#fff;border-top:1px solid #aca899;border-left:1px solid #aca899"></div>
<div class="t " style="left:375px;top:444px;;letter-spacing:-0.40px">931,51 GB</div>
<div class="t " style="left:375px;top:457px;;letter-spacing:-0.17px">Nepřiřazeno</div>
<div class="a" style="left:367px;top:483px;width:617px;height:12px;background:#000;border:1px solid;border-color:#fff #c6c6e8 #c6c6e8 #fff"></div>
<div class="a" style="left:371px;top:498px;width:609px;height:44px;background:#fff;border-top:1px solid #aca899;border-left:1px solid #aca899"></div>
<div class="t " style="left:375px;top:515px;;letter-spacing:-0.40px">931,51 GB</div>
<div class="t " style="left:375px;top:528px;;letter-spacing:-0.17px">Nepřiřazeno</div>
<div class="a" style="left:367px;top:554px;width:617px;height:12px;background:#000080;border:1px solid;border-color:#fff #c6c6e8 #c6c6e8 #fff"></div>
<div class="a" style="left:371px;top:569px;width:609px;height:44px;background:#fff;border-top:1px solid #aca899;border-left:1px solid #aca899"></div>
<div class="t b" style="left:375px;top:573px;;letter-spacing:0.54px">1TBdisk  (I:)</div>
<div class="t " style="left:375px;top:586px;;letter-spacing:-0.60px">931,51 GB NTFS</div>
<div class="t " style="left:375px;top:599px;;letter-spacing:-0.24px">V pořádku</div>
<div class="a" style="left:367px;top:625px;width:554px;height:12px;background:#000080;border:1px solid;border-color:#fff #c6c6e8 #c6c6e8 #fff"></div>
<div class="a" style="left:371px;top:640px;width:546px;height:44px;background:#fff;border-top:1px solid #aca899;border-left:1px solid #aca899"></div>
<div class="t b" style="left:375px;top:644px;;letter-spacing:0.48px">Průtok  (P:)</div>
<div class="t " style="left:375px;top:657px;;letter-spacing:-0.60px">232,88 GB NTFS</div>
<div class="t " style="left:375px;top:670px;;letter-spacing:-0.19px">V pořádku (Aktivní)</div>
<div class="a" style="left:987px;top:262px;width:1px;height:584px;background:#fff"></div>
<div class="a" style="left:210px;top:845px;width:777px;height:1px;background:#fff"></div>
<div class="a" style="left:210px;top:845px;width:1px;height:20px;background:#fff"></div>
<div class="a" style="left:210px;top:864px;width:777px;height:1px;background:#aca899"></div>
<div class="a" style="left:986px;top:845px;width:1px;height:20px;background:#aca899"></div>
<div class="a" style="left:215px;top:848px;width:12px;height:14px;background:#fff"></div>
<div class="a" style="left:216px;top:849px;width:10px;height:12px;background:#000"></div>
<div class="t " style="left:232px;top:848px;;letter-spacing:-0.17px">Nepřiřazeno</div>
<div class="a" style="left:295px;top:848px;width:12px;height:14px;background:#fff"></div>
<div class="a" style="left:296px;top:849px;width:10px;height:12px;background:#000080"></div>
<div class="t " style="left:312px;top:848px;;letter-spacing:-0.39px">Primární oddíl</div>
<div class="a" style="left:382px;top:848px;width:12px;height:14px;background:#fff"></div>
<div class="a" style="left:383px;top:849px;width:10px;height:12px;background:#008000"></div>
<div class="t " style="left:399px;top:848px;;letter-spacing:-0.30px">Rozšířený oddíl</div>
<div class="a" style="left:479px;top:848px;width:12px;height:14px;background:#fff"></div>
<div class="a" style="left:480px;top:849px;width:10px;height:12px;background:#0000ff"></div>
<div class="t " style="left:496px;top:848px;;letter-spacing:-0.16px">Logická jednotka</div>
<div class="a" style="left:6px;top:865px;width:982px;height:2px;background:#fafaf6"></div>
<div class="a" style="left:5px;top:867px;width:983px;height:1px;background:#aca899"></div>
<div class="a" style="left:768px;top:870px;width:1px;height:19px;background:#fff"></div>
<div class="a" style="left:767px;top:870px;width:1px;height:19px;background:#c5c2b2"></div>
<div class="a" style="left:902px;top:870px;width:1px;height:19px;background:#fff"></div>
<div class="a" style="left:901px;top:870px;width:1px;height:19px;background:#c5c2b2"></div>
<div class="a" style="left:986px;top:869px;width:1px;height:20px;background:#fff"></div>
</body></html>
